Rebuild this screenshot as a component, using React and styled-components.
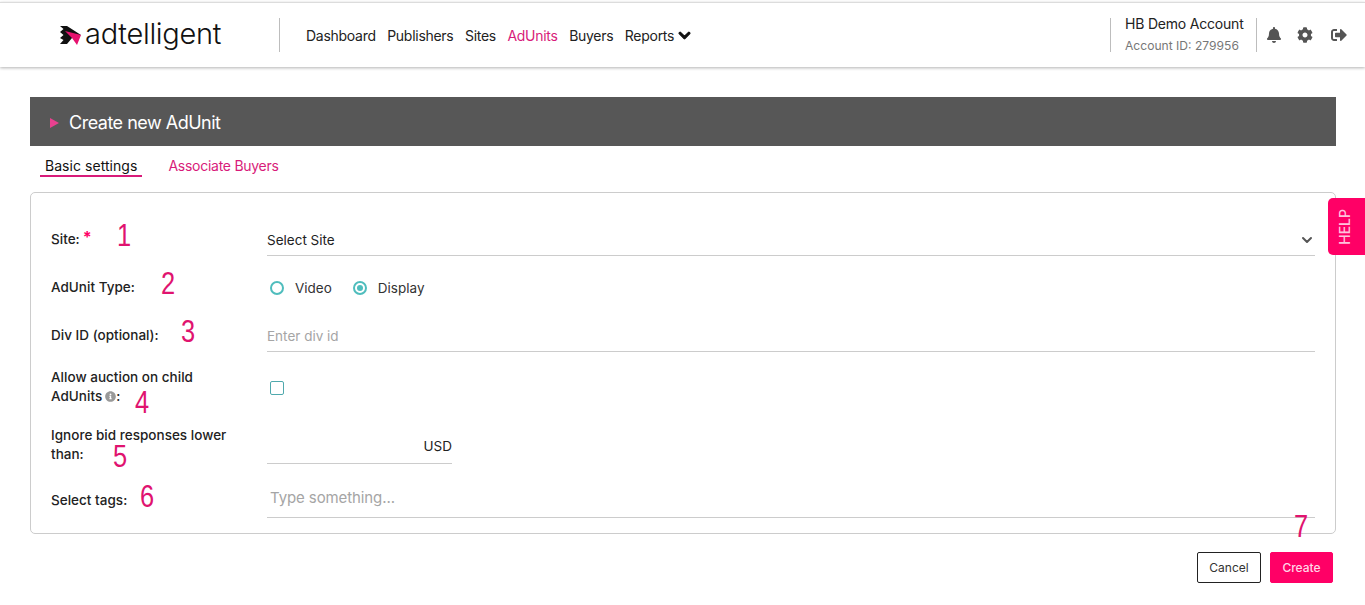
import React from 'react';
import styled, { createGlobalStyle } from 'styled-components';
import { FaBell, FaCog, FaSignOutAlt, FaChevronDown, FaInfoCircle } from 'react-icons/fa';
import { ChevronDown } from 'lucide-react';

const pink = '#ff0066';
const tabPink = '#d81b7a';

const GlobalStyle = createGlobalStyle`
  html, body {
    margin: 0;
    padding: 0;
    background: #fff;
    overflow: hidden;
    font-family: Inter, "Liberation Sans", sans-serif;
    color: #222;
  }
`;

const Page = styled.div`
  width: 1365px;
  height: 605px;
  padding-top: 2px;
  box-sizing: border-box;
`;

const Header = styled.header`
  display: flex;
  align-items: center;
  height: 65px;
  padding-left: 59px;
  box-sizing: border-box;
  border-top: 1px solid #dcdcdc;
  box-shadow: 0 1px 3px rgba(0, 0, 0, 0.3);
`;

const Logo = styled.div`
  display: flex;
  align-items: center;
  gap: 3px;
  width: 220px;
  flex-shrink: 0;
`;

const LogoText = styled.span`
  font-size: 29px;
  font-weight: 300;
  letter-spacing: -0.3px;
  color: #111;
  line-height: 1;
  position: relative;
  top: -2px;
`;

const Divider = styled.div`
  width: 1px;
  height: 34px;
  background: #bdbdbd;
  flex-shrink: 0;
`;

const Nav = styled.nav`
  display: flex;
  align-items: center;
  gap: 11.5px;
  margin-left: 26px;
`;

const NavItem = styled.a`
  display: flex;
  align-items: center;
  gap: 4px;
  font-size: 14px;
  letter-spacing: -0.28px;
  color: ${(p) => (p.$active ? tabPink : '#222')};
`;

const NavChevron = styled(FaChevronDown)`
  font-size: 13px;
  color: #111;
  stroke: #111;
  stroke-width: 40px;
`;

const HeaderRight = styled.div`
  display: flex;
  align-items: center;
  margin-left: auto;
`;

const Account = styled.div`
  width: 145px;
  padding-left: 14px;
  box-sizing: border-box;
  white-space: nowrap;
`;

const AccountName = styled.div`
  font-size: 14px;
  line-height: 22px;
  letter-spacing: -0.2px;
  color: #222;
`;

const AccountId = styled.div`
  font-size: 12.1px;
  line-height: 22px;
  color: #777;
`;

const IconRow = styled.div`
  display: flex;
  align-items: center;
  gap: 15px;
  width: 108px;
  padding-left: 9px;
  box-sizing: border-box;
  color: #555;
  font-size: 16px;
  svg:last-child {
    margin-left: 3px;
  }
`;

const Main = styled.main`
  padding: 30px 29px 0 30px;
`;

const TitleBar = styled.div`
  display: flex;
  align-items: center;
  gap: 10px;
  height: 49px;
  padding: 2px 0 0 20px;
  box-sizing: border-box;
  background: #575757;
  color: #fff;
  font-size: 18px;
  letter-spacing: -0.5px;
`;

const Triangle = styled.span`
  width: 0;
  height: 0;
  border-left: 9px solid #e8408f;
  border-top: 5px solid transparent;
  border-bottom: 5px solid transparent;
`;

const Tabs = styled.div`
  display: flex;
  gap: 17px;
  height: 46px;
  padding: 9px 0 0 10px;
  box-sizing: border-box;
`;

const Tab = styled.a`
  height: 20px;
  padding: 0 5px;
  font-size: 14px;
  line-height: 22px;
  letter-spacing: ${(p) => (p.$active ? '0.05px' : '-0.27px')};
  margin-left: ${(p) => (p.$active ? 0 : 4)}px;
  color: ${(p) => (p.$active ? '#111' : tabPink)};
  border-bottom: ${(p) => (p.$active ? `2px solid ${tabPink}` : '2px solid transparent')};
`;

const Card = styled.section`
  position: relative;
  height: 342px;
  box-sizing: border-box;
  padding: 15px 20px 0 20px;
  border: 1px solid #ccc;
  border-radius: 5px;
`;

const Row = styled.div`
  position: relative;
  display: grid;
  grid-template-columns: 216px 1fr;
  align-items: center;
  height: ${(p) => p.$h}px;
`;

const Label = styled.div`
  width: 185px;
  padding-top: ${(p) => p.$pt || 0}px;
  font-size: 13.5px;
  font-weight: 500;
  line-height: 19px;
  letter-spacing: 0.02px;
  color: #222;
`;

const Star = styled.span`
  color: ${pink};
  font-size: 16px;
  font-weight: 700;
  line-height: 10px;
  margin-left: 3px;
  vertical-align: 1px;
`;

const Note = styled.span`
  position: absolute;
  font-family: "Liberation Sans", sans-serif;
  font-size: 31px;
  line-height: 1;
  color: #e0136f;
  transform: scaleX(0.82);
  transform-origin: left top;
  left: ${(p) => p.$x}px;
  top: ${(p) => p.$y}px;
`;

const Field = styled.div`
  display: flex;
  align-items: center;
  justify-content: ${(p) => (p.$between ? 'space-between' : 'flex-start')};
  box-sizing: border-box;
  width: ${(p) => (p.$w ? `${p.$w}px` : '100%')};
  height: ${(p) => p.$fh || 33}px;
  align-self: end;
  padding-top: 1px;
  border-bottom: 1px solid #ccc;
  font-size: 13.5px;
  color: ${(p) => (p.$muted ? '#a5a5a5' : '#222')};
`;

const AmountField = styled(Field)`
  padding-top: 0;
  padding-bottom: 3px;
`;

const TagsInput = styled(Field)`
  padding-left: 3px;
  padding-bottom: 1px;
  font-size: 15px;
  letter-spacing: -0.1px;
`;

const Radios = styled.div`
  display: flex;
  align-items: center;
  gap: 21px;
  padding: 16px 0 0 3px;
  font-size: 13.5px;
`;

const RadioLabel = styled.label`
  display: flex;
  align-items: center;
  gap: 11px;
  color: #333;
`;

const Radio = styled.span`
  display: flex;
  align-items: center;
  justify-content: center;
  width: 14px;
  height: 14px;
  box-sizing: border-box;
  border: 2px solid #4fbdbd;
  border-radius: 50%;
  &::after {
    content: '';
    display: ${(p) => (p.$checked ? 'block' : 'none')};
    width: 6px;
    height: 6px;
    border-radius: 50%;
    background: #4fbdbd;
  }
`;

const Checkbox = styled.span`
  display: block;
  width: 12px;
  height: 12px;
  margin: 4px 0 0 3px;
  border: 1px solid #4fa9ad;
  border-radius: 2px;
`;

const InfoIcon = styled(FaInfoCircle)`
  color: #999;
  font-size: 11px;
  margin-left: 3px;
  vertical-align: -1px;
`;

const SelectChevron = styled(ChevronDown)`
  color: #555;
`;

const HelpTab = styled.div`
  position: absolute;
  top: 198px;
  right: 0;
  display: flex;
  align-items: center;
  justify-content: center;
  width: 37px;
  height: 57px;
  padding-right: 4px;
  box-sizing: border-box;
  background: ${pink};
  border-radius: 5px 0 0 5px;
  color: #ffc2dc;
  font-size: 14px;
  font-weight: 500;
  writing-mode: vertical-rl;
`;

const HelpText = styled.span`
  transform: rotate(180deg);
`;

const Actions = styled.div`
  display: flex;
  justify-content: flex-end;
  gap: 9px;
  padding: 18px 3px 0 0;
`;

const Button = styled.button`
  width: ${(p) => p.$w}px;
  height: 31px;
  padding: 0;
  font-family: inherit;
  font-size: 12px;
  font-weight: ${(p) => (p.$primary ? 500 : 400)};
  border-radius: 2px;
  border: 1px solid ${(p) => (p.$primary ? pink : '#222')};
  background: ${(p) => (p.$primary ? pink : '#fff')};
  color: ${(p) => (p.$primary ? '#ffd6e6' : '#333')};
`;

const LogoMark = () => (
  <svg width="23" height="21" viewBox="0 0 23 21">
    <path d="M1 1h7l14 9-9 3-5 6H1l3.500-4L1 13l3.500-3L1 7l3.500-3z" fill="#111" />
    <path d="M6 6l16 4-4 10-5-7z" fill="#e6126f" />
  </svg>
);

const App = () => {
  return (
    <Page>
      <GlobalStyle />
      <Header>
        <Logo>
          <LogoMark />
          <LogoText>adtelligent</LogoText>
        </Logo>
        <Divider />
        <Nav>
          <NavItem>Dashboard</NavItem>
          <NavItem>Publishers</NavItem>
          <NavItem>Sites</NavItem>
          <NavItem $active>AdUnits</NavItem>
          <NavItem>Buyers</NavItem>
          <NavItem>
            Reports <NavChevron />
          </NavItem>
        </Nav>
        <HeaderRight>
          <Divider />
          <Account>
            <AccountName>HB Demo Account</AccountName>
            <AccountId>Account ID: 279956</AccountId>
          </Account>
          <Divider />
          <IconRow>
            <FaBell />
            <FaCog />
            <FaSignOutAlt />
          </IconRow>
        </HeaderRight>
      </Header>
      <Main>
        <TitleBar>
          <Triangle />
          Create new AdUnit
        </TitleBar>
        <Tabs>
          <Tab $active>Basic settings</Tab>
          <Tab>Associate Buyers</Tab>
        </Tabs>
        <Card>
          <Row $h={48}>
            <Label $pt={15}>
              Site:<Star>*</Star>
            </Label>
            <Field $between>
              Select Site
              <SelectChevron size={16} strokeWidth={3} />
            </Field>
            <Note $x={66} $y={12}>1</Note>
          </Row>
          <Row $h={48}>
            <Label $pt={15}>AdUnit Type:</Label>
            <Radios>
              <RadioLabel>
                <Radio />
                Video
              </RadioLabel>
              <RadioLabel>
                <Radio $checked />
                Display
              </RadioLabel>
            </Radios>
            <Note $x={110} $y={12}>2</Note>
          </Row>
          <Row $h={48}>
            <Label $pt={15}>Div ID (optional):</Label>
            <Field $muted>Enter div id</Field>
            <Note $x={130} $y={12}>3</Note>
          </Row>
          <Row $h={68}>
            <Label $pt={2}>
              Allow auction on child AdUnits
              <InfoIcon />:
            </Label>
            <Checkbox />
            <Note $x={84} $y={35}>4</Note>
          </Row>
          <Row $h={43}>
            <Label $pt={6}>Ignore bid responses lower than:</Label>
            <AmountField $w={185} $between>
              <span />
              USD
            </AmountField>
            <Note $x={62} $y={21}>5</Note>
          </Row>
          <Row $h={55}>
            <Label $pt={19}>Select tags:</Label>
            <TagsInput $muted $fh={40}>Type something...</TagsInput>
            <Note $x={89} $y={18}>6</Note>
          </Row>
          <Note $x={1263} $y={318}>7</Note>
        </Card>
        <Actions>
          <Button $w={64}>Cancel</Button>
          <Button $w={63} $primary>Create</Button>
        </Actions>
      </Main>
      <HelpTab>
        <HelpText>HELP</HelpText>
      </HelpTab>
    </Page>
  );
};

export default App;
